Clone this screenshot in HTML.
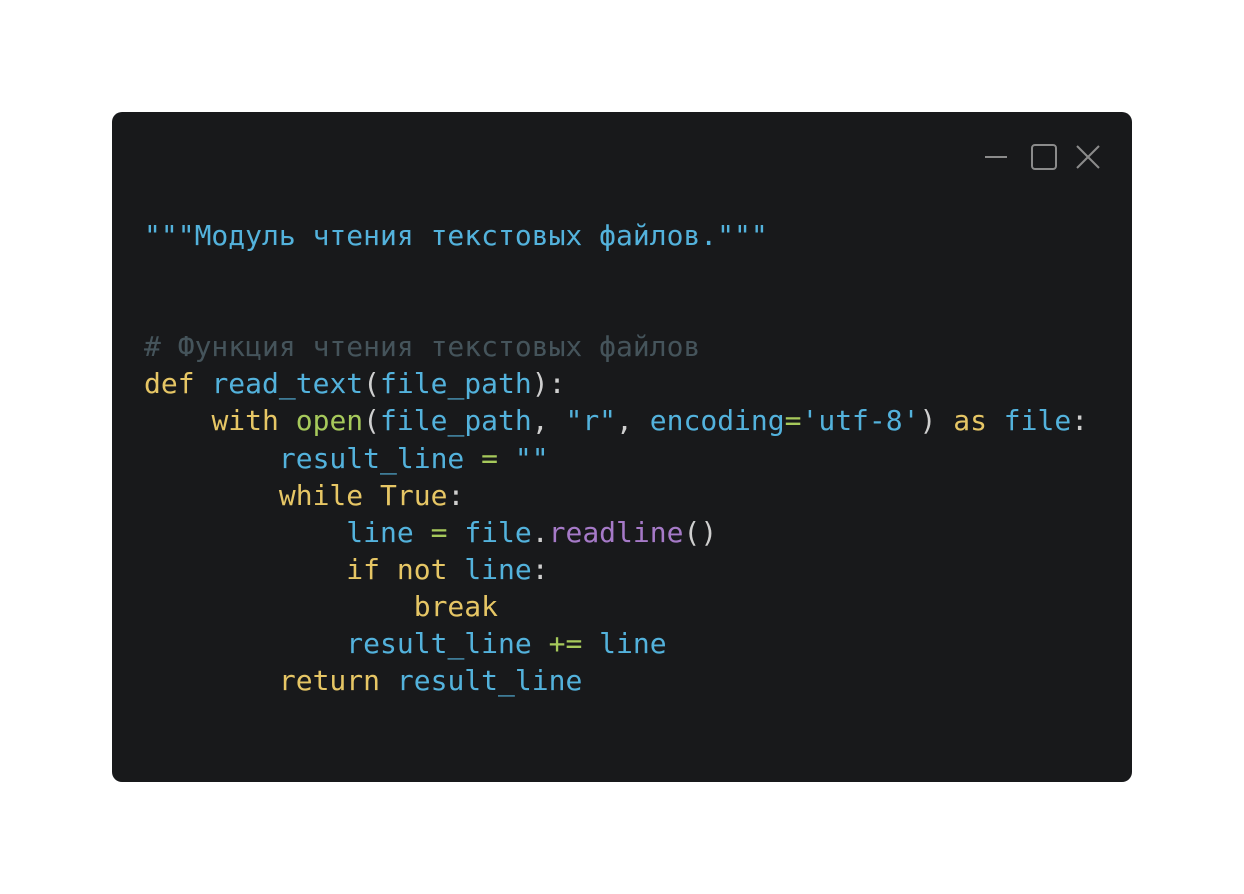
<!DOCTYPE html>
<html><head><meta charset="utf-8"><style>
body{margin:0;background:#fff;width:1244px;height:894px;position:relative;overflow:hidden}
.card{position:absolute;left:112px;top:112px;width:1020px;height:670px;background:#18191b;border-radius:10px}
pre{position:absolute;left:144px;top:217px;margin:0;font-family:"DejaVu Sans Mono","Liberation Mono",monospace;font-size:28px;line-height:37.1px;color:#cfcfcf}
.s{color:#53b2dc}.k{color:#e6c665}.c{color:#45545b}.g{color:#a6c95b}.p{color:#a67ac8}.o{color:#cfcfcf}
</style></head><body>
<div class="card"></div>
<svg style="position:absolute;left:0;top:0" width="1244" height="894">
<g stroke="#8b8b8b" stroke-width="2" fill="none">
<line x1="985" y1="157" x2="1007" y2="157"/>
<rect x="1032" y="145" width="24" height="24" rx="3"/>
<line x1="1077" y1="146" x2="1099" y2="168"/><line x1="1099" y1="146" x2="1077" y2="168"/>
</g></svg>
<pre><span class="s">"""Модуль чтения текстовых файлов."""</span>


<span class="c"># Функция чтения текстовых файлов</span>
<span class="k">def</span> <span class="s">read_text</span>(<span class="s">file_path</span>):
    <span class="k">with</span> <span class="g">open</span>(<span class="s">file_path</span>, <span class="s">"r"</span>, <span class="s">encoding</span><span class="g">=</span><span class="s">'utf-8'</span>) <span class="k">as</span> <span class="s">file</span>:
        <span class="s">result_line</span> <span class="g">=</span> <span class="s">""</span>
        <span class="k">while</span> <span class="k">True</span>:
            <span class="s">line</span> <span class="g">=</span> <span class="s">file</span>.<span class="p">readline</span>()
            <span class="k">if</span> <span class="k">not</span> <span class="s">line</span>:
                <span class="k">break</span>
            <span class="s">result_line</span> <span class="g">+=</span> <span class="s">line</span>
        <span class="k">return</span> <span class="s">result_line</span></pre>
</body></html>
